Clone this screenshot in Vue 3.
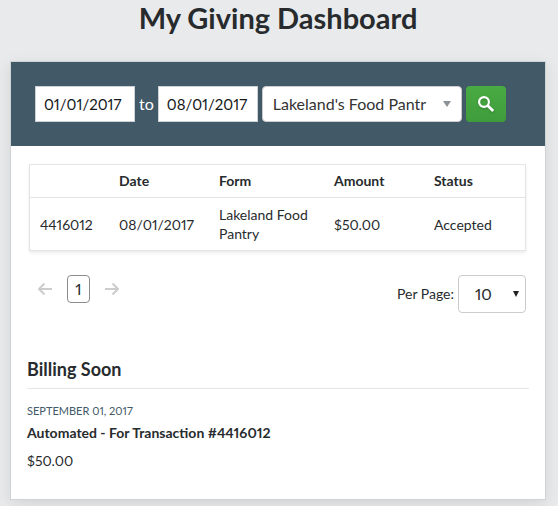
<script setup>
import { ref } from 'vue'

const from = ref('01/01/2017')
const to = ref('08/01/2017')
const form = ref("Lakeland's Food Pantr")
const perPage = ref(10)

const gifts = [
  { id: 4416012, date: '08/01/2017', form: 'Lakeland Food Pantry', amount: '$50.00', status: 'Accepted' }
]

const upcoming = [
  { date: 'September 01, 2017', title: 'Automated - For Transaction #4416012', amount: '$50.00' }
]
</script>

<template>
  <main class="page">
    <h1>My Giving Dashboard</h1>
    <div class="card">
      <form class="filters" @submit.prevent>
        <input v-model="from" class="date" type="text" aria-label="From date">
        <label for="to">to</label>
        <input id="to" v-model="to" class="date" type="text">
        <div class="select form-select">
          <select v-model="form" aria-label="Form">
            <option>Lakeland's Food Pantr</option>
          </select>
          <svg width="8" height="6" viewBox="0 0 8 6"><path d="M0 0h8L4 6z" fill="#8b9298" /></svg>
        </div>
        <button class="search" type="submit" aria-label="Search">
          <svg width="18" height="18" viewBox="0 0 18 18" fill="none" stroke="#fff">
            <circle cx="7" cy="7" r="4.9" stroke-width="2.2" />
            <path d="M10.6 10.6l5.6 5.4" stroke-width="2.8" />
          </svg>
        </button>
      </form>

      <section class="history">
        <table>
          <thead>
            <tr>
              <th class="id"></th>
              <th class="when">Date</th>
              <th class="what">Form</th>
              <th class="amount">Amount</th>
              <th>Status</th>
            </tr>
          </thead>
          <tbody>
            <tr v-for="gift in gifts" :key="gift.id">
              <td>{{ gift.id }}</td>
              <td>{{ gift.date }}</td>
              <td>{{ gift.form }}</td>
              <td>{{ gift.amount }}</td>
              <td>{{ gift.status }}</td>
            </tr>
          </tbody>
        </table>

        <div class="controls">
          <nav class="pager">
            <button type="button" class="arrow" aria-label="Previous" disabled>
              <svg width="14" height="12" viewBox="0 0 14 12"><path d="M14 6H1M6.500 .5L1 6l5.500 5.500" /></svg>
            </button>
            <button type="button" class="current">1</button>
            <button type="button" class="arrow" aria-label="Next" disabled>
              <svg width="14" height="12" viewBox="0 0 14 12"><path d="M0 6h13M7.500 .5L13 6l-5.500 5.500" /></svg>
            </button>
          </nav>
          <div class="per-page">
            <label for="per-page">Per Page:</label>
            <div class="select page-select">
              <select id="per-page" v-model.number="perPage">
                <option>10</option>
                <option>25</option>
                <option>50</option>
              </select>
              <svg width="6" height="6" viewBox="0 0 6 6"><path d="M0 0h6L3 6z" fill="#222" /></svg>
            </div>
          </div>
        </div>
      </section>

      <section class="billing">
        <h2>Billing Soon</h2>
        <article v-for="item in upcoming" :key="item.title">
          <time>{{ item.date }}</time>
          <h3>{{ item.title }}</h3>
          <p>{{ item.amount }}</p>
        </article>
      </section>
    </div>
  </main>
</template>

<style>
body {
  background: #e9eaeb;
}
</style>

<style scoped>
* {
  box-sizing: border-box;
}
.page {
  padding: 0 13px 7px 11px;
  font-family: Lato, "Liberation Sans", sans-serif;
  font-size: 14px;
  font-variant-numeric: proportional-nums;
  line-height: 20px;
  color: #272b2d;
}
h1 {
  margin: 0;
  padding-bottom: 26px;
  font-size: 29px;
  line-height: 36px;
  font-weight: 700;
  text-align: center;
}
.card {
  background: #fff;
  box-shadow: 0 0 0 1px #cfd3d5, 0 4px 14px rgba(60, 75, 85, 0.15);
}
.filters {
  display: flex;
  align-items: center;
  gap: 4px;
  padding: 24px;
  background: #425968;
  color: #fff;
  font-size: 16px;
}
input,
select,
button {
  margin: 0;
  font: inherit;
  font-variant-numeric: inherit;
  color: inherit;
}
.date {
  width: 100px;
  height: 36px;
  padding: 0 8px;
  border: 1px solid #ccd2d6;
  border-radius: 0;
  background: #fff;
  color: #16191b;
  font-size: 15px;
}
.select {
  position: relative;
}
.select select {
  width: 100%;
  appearance: none;
  border: 1px solid #ccc;
  border-radius: 4px;
  background: #fff;
}
.select svg {
  position: absolute;
  top: 50%;
  transform: translateY(-50%);
  pointer-events: none;
}
.form-select {
  width: 200px;
}
.form-select select {
  height: 36px;
  padding: 0 32px 0 10px;
  color: #333;
}
.form-select svg {
  right: 11px;
}
.search {
  display: flex;
  align-items: center;
  justify-content: center;
  width: 40px;
  height: 36px;
  padding: 0;
  border: 0;
  border-radius: 4px;
  background: linear-gradient(#49ab43, #3f9c3b);
}
.search svg {
  filter: drop-shadow(0 1px 1px rgba(0, 0, 0, 0.2));
}
.history {
  padding: 18px 19px 0 18px;
}
table {
  width: 100%;
  table-layout: fixed;
  border-collapse: separate;
  border-spacing: 0;
  border: 1px solid #e2e4e6;
  box-shadow: 0 2px 3px rgba(0, 0, 0, 0.08);
}
th {
  height: 33px;
  padding: 0 10px;
  border-bottom: 1px solid #e2e4e6;
  text-align: left;
  font-weight: 700;
}
td {
  padding: 7px 10px;
  line-height: 19px;
  vertical-align: middle;
}
.id {
  width: 79px;
}
.when,
.amount {
  width: 100px;
}
.what {
  width: 115px;
}
.controls {
  display: flex;
  justify-content: space-between;
  align-items: flex-start;
  padding-top: 24px;
}
.pager {
  display: flex;
  align-items: center;
  gap: 15px;
  padding-left: 9px;
}
.pager button {
  display: flex;
  align-items: center;
  justify-content: center;
  height: 28px;
  padding: 0;
  border: 0;
  background: none;
}
.pager .current {
  width: 23px;
  border: 1px solid #8c8c8c;
  border-radius: 4px;
  font-size: 16px;
}
.arrow path {
  fill: none;
  stroke: #cdcdcd;
  stroke-width: 2;
}
.per-page {
  display: flex;
  align-items: center;
  gap: 4px;
}
.page-select {
  width: 68px;
}
.page-select select {
  height: 38px;
  padding: 0 16px;
  font-size: 16px;
}
.page-select svg {
  right: 7px;
}
.billing {
  padding: 44px 16px 28px;
}
h2 {
  margin: 0 0 12px;
  padding-bottom: 7px;
  border-bottom: 1px solid #e5e6e7;
  font-size: 18px;
  line-height: 24px;
}
time {
  display: block;
  font-size: 11px;
  color: #425968;
  text-transform: uppercase;
}
h3 {
  margin: 2px 0 8px;
  font-size: 14px;
}
p {
  margin: 0;
}
</style>
